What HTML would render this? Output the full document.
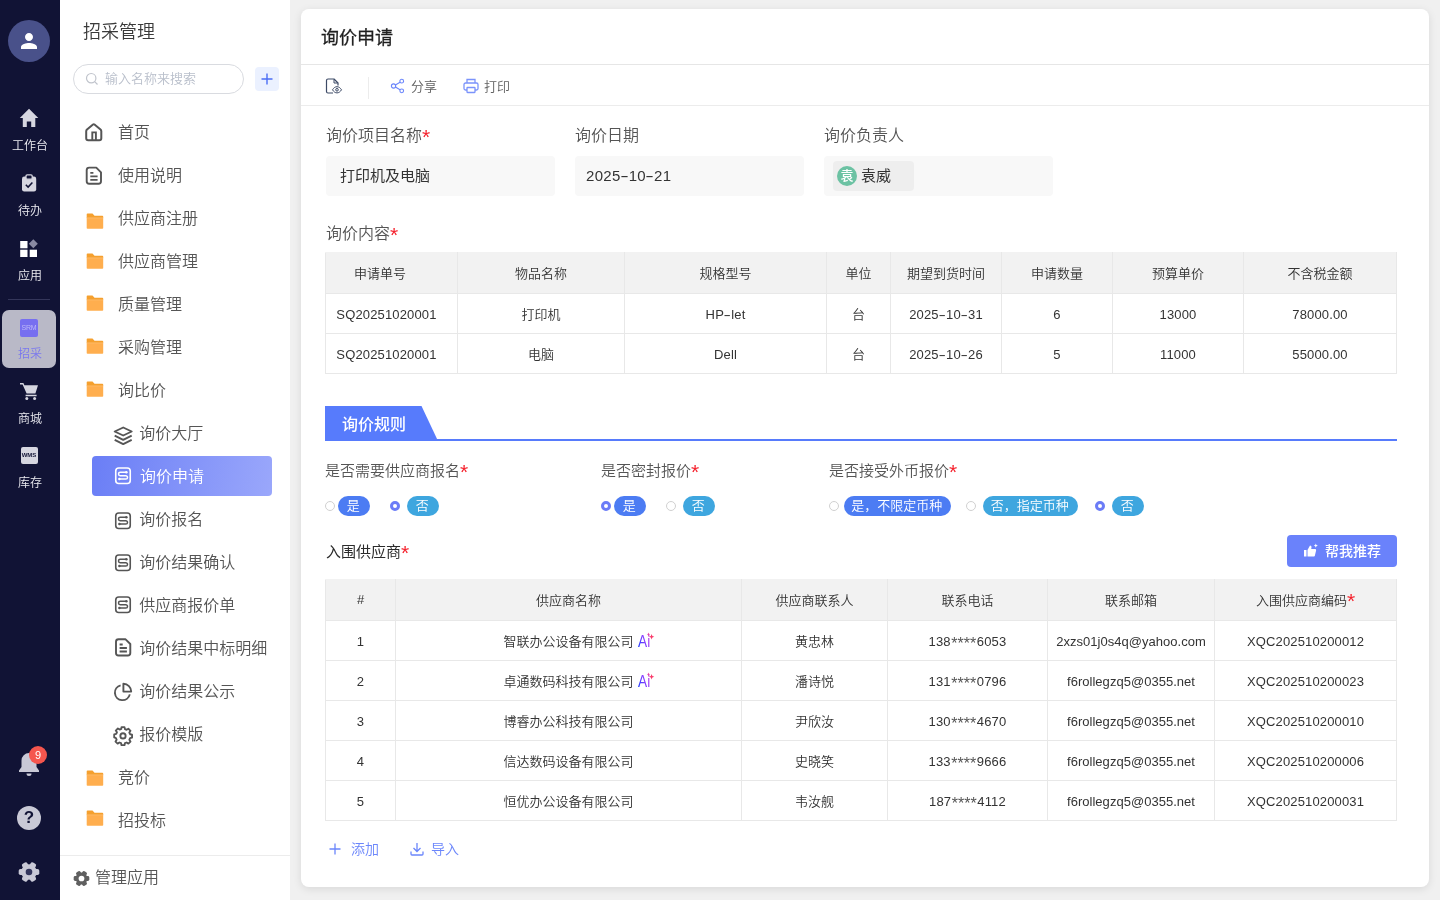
<!DOCTYPE html>
<html lang="zh-CN">
<head>
<meta charset="utf-8">
<title>询价申请</title>
<style>
*{box-sizing:border-box;margin:0;padding:0}
html,body{width:1440px;height:900px;overflow:hidden;background:#f0f0f0;
 font-family:"Liberation Sans","Noto Sans CJK SC",sans-serif;color:#333;font-weight:350}
#root{position:absolute;left:0;top:0;width:1440px;height:900px;will-change:transform}
.abs{position:absolute}
#rail{position:absolute;left:0;top:0;width:60px;height:900px;background:#111335}
.rl{position:absolute;left:0;width:60px;text-align:center;color:#ececf2;font-size:12px;line-height:14px}
#side{position:absolute;left:60px;top:0;width:230px;height:900px;background:#fff}
#side h1{position:absolute;left:23px;top:19px;font-size:18px;font-weight:350;color:#3a3a3a;line-height:26px}
.search{position:absolute;left:13px;top:64px;width:171px;height:30px;border:1px solid #d9dbe0;border-radius:15px}
.search span{position:absolute;left:31px;top:0;line-height:28px;font-size:13px;color:#b9bfcb}
.plus{position:absolute;left:195px;top:67px;width:24px;height:24px;background:#ebf1ff;border-radius:4px}
.mi{position:absolute;left:0;width:230px;height:40px;font-size:16px;line-height:40px;color:#555}
.mi .ic{position:absolute;top:8px;width:24px;height:24px}
.mi .tx{position:absolute;top:1px}
.mi.l1 .ic{left:22px}
.mi.l1 .tx{left:58px}
.mi.l2 .ic{left:50px}
.mi.l2 .tx{left:79.300px}
.mi.sel{left:32px;width:180px;border-radius:4px;background:linear-gradient(100deg,#6a7ef6,#9aa7fb);color:#fff}
.mi.sel .ic{left:18px}
.mi.sel .tx{left:48px}
#sidefoot{position:absolute;left:0;top:855px;width:230px;height:45px;border-top:1px solid #ececec;font-size:16px;color:#555;line-height:44px}
#card{position:absolute;left:301px;top:9px;width:1128px;height:878px;background:#fff;border-radius:8px;box-shadow:0 2px 8px rgba(0,0,0,.10)}
#card h2{position:absolute;left:20px;top:14.500px;font-size:18px;font-weight:400;color:#1f1f1f;line-height:28px;-webkit-text-stroke:.3px #1f1f1f}
.hl{position:absolute;left:0;width:1128px;height:1px;background:#e6e6e6}
.tb{font-size:13px;line-height:20px;color:#606060}
.lab{position:absolute;font-size:16px;line-height:22px;color:#555;white-space:nowrap}
.l15{font-size:15px}
.req{color:#f5222d;font-size:21px;line-height:0;position:relative;top:3px;font-weight:400}
.inp{position:absolute;height:40px;width:229px;background:#f8f8f8;font-weight:400;border-radius:4px;font-size:15px;line-height:40px;color:#333}
.num15{letter-spacing:.3px}
.hy{display:inline-block;transform:scaleX(1.700);margin:0 1.400px}
table{position:absolute;border-collapse:collapse;table-layout:fixed;font-size:13px;color:#333}
td,th{border:1px solid #e8e8e8;text-align:center;font-weight:350;height:40px;padding:0 0 1px;white-space:nowrap}
th{background:#f2f2f2;height:41px;border-top-color:#f2f2f2;padding-top:0;padding-bottom:2px}
td.n{letter-spacing:.15px;padding:1px 0 0}
.t1 th:first-child{padding-right:23px}
.t1 td:first-child{padding-right:10px}
.st{font-size:16px;line-height:0;position:relative;top:3.500px;letter-spacing:0;margin:0 .7px 0 .5px;color:#555}
td.e{letter-spacing:.030px}
.nm{position:relative;display:inline-block}
.ai{position:absolute;left:100%;margin-left:4.800px;top:0.500px}
.pill{position:absolute;top:487px;height:20px;border-radius:10px;color:#fff;font-size:13px;line-height:19px;text-align:center;font-weight:350;padding-right:1.500px}
.pb{background:#4c7cf3}
.pc{background:#3ea6df}
.rad{position:absolute;width:10px;height:10px;border-radius:50%;border:1px solid #d0d0d0;background:#fff}
.rad.on{border:3px solid #6b7cf7}
.lnk{position:absolute;font-size:14px;color:#6b86fb;line-height:20px}
</style>
</head>
<body>
<svg width="0" height="0" style="position:absolute"><defs><linearGradient id="ag" x1="0" y1="0.800" x2="1" y2="0.200"><stop offset="0" stop-color="#1f3cff"/><stop offset="0.550" stop-color="#8a40ff"/><stop offset="1" stop-color="#c840e0"/></linearGradient></defs></svg>
<div id="root">
<div id="rail">
<div class="abs" style="left:8px;top:20px;width:42px;height:42px;border-radius:50%;background:#49518a"></div>
<svg class="abs" style="left:17px;top:29px" width="24" height="24" viewBox="0 0 24 24"><path fill="#fff" d="M12 12c2.210 0 4-1.790 4-4s-1.790-4-4-4-4 1.790-4 4 1.790 4 4 4zm0 2c-2.670 0-8 1.340-8 4v2h16v-2c0-2.660-5.330-4-8-4z"/></svg>
<svg class="abs" style="left:0;top:100px" width="60" height="40" viewBox="0 100 60 40"><path d="M29 108.800 38.300 118h-3v9h-4.100v-5.400h-4.400v5.400h-4v-9h-3z" fill="#d6d6e0"/></svg>
<div class="rl" style="top:139px">工作台</div>
<svg class="abs" style="left:0;top:165px" width="60" height="35" viewBox="0 165 60 35"><rect x="22" y="176.600" width="14.200" height="14.800" rx="2.200" fill="#d6d6e0"/><rect x="26" y="174.800" width="6.200" height="4.400" rx="1.200" fill="#111335" stroke="#d6d6e0" stroke-width="1.300"/><path d="M25.800 184.800l2.300 2.300 4.300-4.600" stroke="#111335" stroke-width="1.500" fill="none"/></svg>
<div class="rl" style="top:204px">待办</div>
<svg class="abs" style="left:0;top:235px" width="60" height="30" viewBox="0 235 60 30"><rect x="20.200" y="241" width="7.300" height="7.300" fill="#fff"/><rect x="20.200" y="249.700" width="7.300" height="7.300" fill="#fff"/><rect x="29.700" y="249.700" width="7.300" height="7.300" fill="#fff"/><path d="M33.300 239.300l4.500 4.500-4.500 4.500-4.500-4.500z" fill="#8a8aa2"/></svg>
<div class="rl" style="top:269px">应用</div>
<div class="abs" style="left:8px;top:299px;width:42px;height:1px;background:#34365a"></div>
<div class="abs" style="left:2px;top:310px;width:54px;height:58px;border-radius:7px;background:#b9b9c7"></div>
<div class="abs" style="left:20px;top:319px;width:18px;height:18px;border-radius:2px;background:#776ff0;color:#bdb8f8;font-size:7px;line-height:18px;text-align:center;letter-spacing:-0.200px">SRM</div>
<div class="rl" style="top:347px;color:#7a78ee">招采</div>
<svg class="abs" style="left:0;top:378px" width="60" height="26" viewBox="0 378 60 26"><path d="M20 383h3.400l1 2.300H38l-2.600 8.200H26.600L22.600 384.600H20z" fill="#d6d6e0"/><path d="M25.600 394.800h11v1.500h-11z" fill="#d6d6e0"/><circle cx="26.800" cy="398.600" r="1.500" fill="#d6d6e0"/><circle cx="34.600" cy="398.600" r="1.500" fill="#d6d6e0"/></svg>
<div class="rl" style="top:412px">商城</div>
<div class="abs" style="left:20.500px;top:446.500px;width:17px;height:17px;border-radius:2px;background:#d6d6e0;color:#111335;font-size:6px;line-height:17px;text-align:center;font-weight:700">WMS</div>
<div class="rl" style="top:476px">库存</div>
<svg class="abs" style="left:16px;top:750px" width="26" height="28" viewBox="0 0 26 28"><path d="M13 3a7.500 7.500 0 0 0-7.500 7.500V17L3 20.500V22h20v-1.500L20.500 17v-6.500A7.500 7.500 0 0 0 13 3z" fill="#c9c9d6"/><path d="M10.500 23.500a2.500 2.500 0 0 0 5 0z" fill="#c9c9d6"/></svg>
<div class="abs" style="left:29px;top:746px;width:18px;height:18px;border-radius:50%;background:#f5564e;color:#fff;font-size:11px;line-height:18px;text-align:center">9</div>
<div class="abs" style="left:17px;top:806px;width:24px;height:24px;border-radius:50%;background:#c9c9d6;color:#111335;font-size:17px;line-height:24px;text-align:center;font-weight:700">?</div>
<svg class="abs" style="left:15.500px;top:858.700px" width="26" height="26" viewBox="-13 -13 26 26"><g fill="#c9c9d6"><circle r="7.800"/><rect x="-3" y="-10.300" width="6" height="6" rx="1.800" transform="rotate(30)"/><rect x="-3" y="-10.300" width="6" height="6" rx="1.800" transform="rotate(90)"/><rect x="-3" y="-10.300" width="6" height="6" rx="1.800" transform="rotate(150)"/><rect x="-3" y="-10.300" width="6" height="6" rx="1.800" transform="rotate(210)"/><rect x="-3" y="-10.300" width="6" height="6" rx="1.800" transform="rotate(270)"/><rect x="-3" y="-10.300" width="6" height="6" rx="1.800" transform="rotate(330)"/></g><circle r="3.300" fill="#33355c"/></svg>
</div>
<div id="side">
<h1>招采管理</h1>
<div class="search"><svg class="abs" style="left:11px;top:7px" width="14" height="14" viewBox="0 0 14 14"><circle cx="6.200" cy="6.200" r="4.700" fill="none" stroke="#c0c4cc" stroke-width="1.200"/><path d="M9.700 9.700l2.800 2.800" stroke="#c0c4cc" stroke-width="1.200"/></svg><span>输入名称来搜索</span></div>
<div class="plus"><svg width="24" height="24" viewBox="0 0 24 24"><path d="M12 6.500v11M6.500 12h11" stroke="#4c6ef5" stroke-width="1.400"/></svg></div>
<div class="mi l1" style="top:112px"><svg class="ic" viewBox="0 0 24 24" ><path d="M4.200 11.200Q4.200 10.200 5 9.500L11 4.500Q11.750 3.900 12.500 4.500L18.500 9.500Q19.300 10.200 19.300 11.200V18.200Q19.300 20.200 17.300 20.200H6.200Q4.200 20.200 4.200 18.200Z" fill="none" stroke="#555" stroke-width="2" stroke-linejoin="round"/><path d="M10.300 20V12.400H13.900V20" fill="none" stroke="#555" stroke-width="1.900"/></svg><span class="tx">首页</span></div>
<div class="mi l1" style="top:155px"><svg class="ic" viewBox="0 0 24 24" ><path d="M7.200 4.600H14.300L19 9.300V18.300Q19 20.800 16.500 20.800H7.200Q4.700 20.800 4.700 18.300V7.100Q4.700 4.600 7.200 4.600Z" fill="none" stroke="#555" stroke-width="1.900" stroke-linejoin="round"/><path d="M8.300 9.800H11.400M8.300 13.300H15.600M8.300 16.800H15.600" fill="none" stroke="#555" stroke-width="1.800"/></svg><span class="tx">使用说明</span></div>
<div class="mi l1" style="top:198px"><svg class="ic" viewBox="0 0 24 24" ><path d="M4.700 8.300Q4.700 7.500 5.500 7.500H10.500L12.500 9.700H20.400Q21.200 9.700 21.200 10.500V12H4.700Z" fill="#f5a02e"/><path d="M4.700 11.700H21.200V22Q21.200 22.800 20.400 22.800H5.500Q4.700 22.800 4.700 22Z" fill="#ffae4e"/><path d="M4.700 11.900H21.200" stroke="#ffc888" stroke-width="0.500"/></svg><span class="tx">供应商注册</span></div>
<div class="mi l1" style="top:241px"><svg class="ic" style="top:5px" viewBox="0 0 24 24" ><path d="M4.700 8.300Q4.700 7.500 5.500 7.500H10.500L12.500 9.700H20.400Q21.200 9.700 21.200 10.500V12H4.700Z" fill="#f5a02e"/><path d="M4.700 11.700H21.200V22Q21.200 22.800 20.400 22.800H5.500Q4.700 22.800 4.700 22Z" fill="#ffae4e"/><path d="M4.700 11.900H21.200" stroke="#ffc888" stroke-width="0.500"/></svg><span class="tx">供应商管理</span></div>
<div class="mi l1" style="top:284px"><svg class="ic" style="top:4.2px" viewBox="0 0 24 24" ><path d="M4.700 8.300Q4.700 7.500 5.500 7.500H10.500L12.500 9.700H20.400Q21.200 9.700 21.200 10.500V12H4.700Z" fill="#f5a02e"/><path d="M4.700 11.700H21.200V22Q21.200 22.800 20.400 22.800H5.500Q4.700 22.800 4.700 22Z" fill="#ffae4e"/><path d="M4.700 11.900H21.200" stroke="#ffc888" stroke-width="0.500"/></svg><span class="tx">质量管理</span></div>
<div class="mi l1" style="top:327px"><svg class="ic" style="top:4px" viewBox="0 0 24 24" ><path d="M4.700 8.300Q4.700 7.500 5.500 7.500H10.500L12.500 9.700H20.400Q21.200 9.700 21.200 10.500V12H4.700Z" fill="#f5a02e"/><path d="M4.700 11.700H21.200V22Q21.200 22.800 20.400 22.800H5.500Q4.700 22.800 4.700 22Z" fill="#ffae4e"/><path d="M4.700 11.900H21.200" stroke="#ffc888" stroke-width="0.500"/></svg><span class="tx">采购管理</span></div>
<div class="mi l1" style="top:370px"><svg class="ic" style="top:4px" viewBox="0 0 24 24" ><path d="M4.700 8.300Q4.700 7.500 5.500 7.500H10.500L12.500 9.700H20.400Q21.200 9.700 21.200 10.500V12H4.700Z" fill="#f5a02e"/><path d="M4.700 11.700H21.200V22Q21.200 22.800 20.400 22.800H5.500Q4.700 22.800 4.700 22Z" fill="#ffae4e"/><path d="M4.700 11.900H21.200" stroke="#ffc888" stroke-width="0.500"/></svg><span class="tx">询比价</span></div>
<div class="mi l2" style="top:413px"><svg class="ic" viewBox="0 0 24 24" style="overflow:visible"><path d="M13.200 6.500 4.700 10.500 13.200 14.500 21.700 10.500Z" fill="none" stroke="#555" stroke-width="1.900" stroke-linejoin="round"/><path d="M4.700 14.700 13.200 18.900 21.700 14.700M4.700 18.900 13.200 23.100 21.700 18.900" fill="none" stroke="#555" stroke-width="1.900" stroke-linejoin="round"/></svg><span class="tx">询价大厅</span></div>
<div class="mi l2 sel" style="top:456px"><svg class="ic" viewBox="0 0 24 24" ><rect x="5.750" y="3.950" width="14.500" height="15.600" rx="3" fill="none" stroke="#fff" stroke-width="1.600"/><path d="M16.300 8.300H10.200a1.700 1.700 0 0 0 0 3.400H15.800a1.700 1.700 0 0 1 0 3.400H9.500" fill="none" stroke="#fff" stroke-width="1.500"/><circle cx="16.400" cy="8.300" r="1.250" fill="#fff"/><circle cx="9.400" cy="15.100" r="1.250" fill="#fff"/></svg><span class="tx">询价申请</span></div>
<div class="mi l2" style="top:499px"><svg class="ic" style="top:9.9px" viewBox="0 0 24 24" ><rect x="5.750" y="3.950" width="14.500" height="15.600" rx="3" fill="none" stroke="#555" stroke-width="1.600"/><path d="M16.300 8.300H10.200a1.700 1.700 0 0 0 0 3.400H15.800a1.700 1.700 0 0 1 0 3.400H9.500" fill="none" stroke="#555" stroke-width="1.500"/><circle cx="16.400" cy="8.300" r="1.250" fill="#555"/><circle cx="9.400" cy="15.100" r="1.250" fill="#555"/></svg><span class="tx">询价报名</span></div>
<div class="mi l2" style="top:542px"><svg class="ic" style="top:8.8px" viewBox="0 0 24 24" ><rect x="5.750" y="3.950" width="14.500" height="15.600" rx="3" fill="none" stroke="#555" stroke-width="1.600"/><path d="M16.300 8.300H10.200a1.700 1.700 0 0 0 0 3.400H15.800a1.700 1.700 0 0 1 0 3.400H9.500" fill="none" stroke="#555" stroke-width="1.500"/><circle cx="16.400" cy="8.300" r="1.250" fill="#555"/><circle cx="9.400" cy="15.100" r="1.250" fill="#555"/></svg><span class="tx">询价结果确认</span></div>
<div class="mi l2" style="top:585px"><svg class="ic" viewBox="0 0 24 24" ><rect x="5.750" y="3.950" width="14.500" height="15.600" rx="3" fill="none" stroke="#555" stroke-width="1.600"/><path d="M16.300 8.300H10.200a1.700 1.700 0 0 0 0 3.400H15.800a1.700 1.700 0 0 1 0 3.400H9.500" fill="none" stroke="#555" stroke-width="1.500"/><circle cx="16.400" cy="8.300" r="1.250" fill="#555"/><circle cx="9.400" cy="15.100" r="1.250" fill="#555"/></svg><span class="tx">供应商报价单</span></div>
<div class="mi l2" style="top:628px"><svg class="ic" viewBox="0 0 24 24" ><g transform="translate(1.300,-1.300)"><path d="M7.200 4.600H14.300L19 9.300V18.300Q19 20.800 16.500 20.800H7.200Q4.700 20.800 4.700 18.300V7.100Q4.700 4.600 7.200 4.600Z" fill="none" stroke="#555" stroke-width="1.900" stroke-linejoin="round"/><path d="M8.300 9.800H11.400M8.300 13.300H15.600M8.300 16.800H15.600" fill="none" stroke="#555" stroke-width="1.800"/></g></svg><span class="tx">询价结果中标明细</span></div>
<div class="mi l2" style="top:671px"><svg class="ic" viewBox="0 0 24 24" ><path d="M10.600 6.300A7.550 7.550 0 1 0 19.800 15.400" fill="none" stroke="#555" stroke-width="1.900"/><path d="M13.400 4.800V12.600H21.200A7.800 7.800 0 0 0 13.400 4.800Z" fill="none" stroke="#555" stroke-width="1.900" stroke-linejoin="round"/></svg><span class="tx">询价结果公示</span></div>
<div class="mi l2" style="top:714px"><svg class="ic" viewBox="0 0 24 24" ><g transform="translate(13,13.900) scale(0.880) translate(-12,-13)"><path fill="none" stroke="#555" stroke-width="2.100" stroke-linejoin="round" d="M10.300 3h3.400l.5 2.300 1.900.8 2-1.300 2.400 2.400-1.300 2 .8 1.900 2.300.5v3.400l-2.300.5-.8 1.900 1.300 2-2.400 2.400-2-1.300-1.900.8-.5 2.300h-3.400l-.5-2.300-1.900-.8-2 1.300-2.400-2.400 1.300-2-.8-1.900L2 14.700v-3.400l2.300-.5.800-1.900-1.300-2 2.400-2.400 2 1.300 1.900-.8z"/><circle cx="12" cy="13" r="3" fill="none" stroke="#555" stroke-width="2.100"/></g></svg><span class="tx">报价模版</span></div>
<div class="mi l1" style="top:757px"><svg class="ic" style="top:6.3px" viewBox="0 0 24 24" ><path d="M4.700 8.300Q4.700 7.500 5.500 7.500H10.500L12.500 9.700H20.400Q21.200 9.700 21.200 10.500V12H4.700Z" fill="#f5a02e"/><path d="M4.700 11.700H21.200V22Q21.200 22.800 20.400 22.800H5.500Q4.700 22.800 4.700 22Z" fill="#ffae4e"/><path d="M4.700 11.900H21.200" stroke="#ffc888" stroke-width="0.500"/></svg><span class="tx">竞价</span></div>
<div class="mi l1" style="top:800px"><svg class="ic" style="top:3.3px" viewBox="0 0 24 24" ><path d="M4.700 8.300Q4.700 7.500 5.500 7.500H10.500L12.500 9.700H20.400Q21.200 9.700 21.200 10.500V12H4.700Z" fill="#f5a02e"/><path d="M4.700 11.700H21.200V22Q21.200 22.800 20.400 22.800H5.500Q4.700 22.800 4.700 22Z" fill="#ffae4e"/><path d="M4.700 11.900H21.200" stroke="#ffc888" stroke-width="0.500"/></svg><span class="tx">招投标</span></div>
<div id="sidefoot"><svg class="abs" style="left:12.200px;top:13px" width="19" height="19" viewBox="-9 -9 18 18"><g fill="#606060" transform="rotate(30)"><circle r="5.600"/><rect x="-2.300" y="-7.400" width="4.600" height="4.500" rx="1.400" transform="rotate(0)"/><rect x="-2.300" y="-7.400" width="4.600" height="4.500" rx="1.400" transform="rotate(60)"/><rect x="-2.300" y="-7.400" width="4.600" height="4.500" rx="1.400" transform="rotate(120)"/><rect x="-2.300" y="-7.400" width="4.600" height="4.500" rx="1.400" transform="rotate(180)"/><rect x="-2.300" y="-7.400" width="4.600" height="4.500" rx="1.400" transform="rotate(240)"/><rect x="-2.300" y="-7.400" width="4.600" height="4.500" rx="1.400" transform="rotate(300)"/></g><circle r="2.700" fill="#fff"/></svg><span class="abs" style="left:35px;top:0">管理应用</span></div>
</div>
<div id="card">
<h2>询价申请</h2>
<div class="hl" style="top:55px"></div>
<div class="hl" style="top:96px;background:#ececec"></div>
<svg class="abs" style="left:22.8px;top:67px" width="20" height="20" viewBox="0 0 20 20"><path d="M9 17H4a1.500 1.500 0 0 1-1.500-1.500v-11A1.500 1.500 0 0 1 4 3h6l4 4v2.500" fill="none" stroke="#3d4a66" stroke-width="1.200" stroke-linejoin="round"/><path d="M10 3.300V7h3.700" fill="none" stroke="#3d4a66" stroke-width="1"/><path d="M8.500 13.800c1.300-2.100 2.800-3.100 4.500-3.100s3.200 1 4.500 3.100c-1.300 2.100-2.800 3.100-4.500 3.100s-3.200-1-4.500-3.100z" fill="#fff" stroke="#3d4a66" stroke-width="1"/><circle cx="13" cy="13.800" r="1.300" fill="none" stroke="#3d4a66" stroke-width="1"/></svg>
<div class="abs" style="left:67px;top:68px;width:1px;height:22px;background:#ececec"></div>
<svg class="abs" style="left:88px;top:68px" width="18" height="18" viewBox="0 0 18 18"><g transform="translate(9,9) scale(0.930) translate(-9,-9)"><circle cx="4.200" cy="9" r="2.300" fill="none" stroke="#6b86fb" stroke-width="1.200"/><circle cx="13" cy="3.800" r="2" fill="none" stroke="#6b86fb" stroke-width="1.200"/><circle cx="13" cy="14.200" r="2" fill="none" stroke="#6b86fb" stroke-width="1.200"/><path d="M6.200 7.900l5-3M6.200 10.100l5 3" stroke="#6b86fb" stroke-width="1.200"/></g></svg>
<span class="abs tb" style="left:110px;top:68px">分享</span>
<svg class="abs" style="left:161px;top:68px" width="18" height="18" viewBox="0 0 18 18"><path d="M5 6V2.500h8V6" fill="none" stroke="#7b93fb" stroke-width="1.300"/><rect x="2" y="6" width="14" height="7" rx="1.500" fill="none" stroke="#7b93fb" stroke-width="1.300"/><rect x="5" y="10.500" width="8" height="5" rx="0.500" fill="#fff" stroke="#7b93fb" stroke-width="1.300"/></svg>
<span class="abs tb" style="left:183px;top:68px">打印</span>
<div class="lab" style="left:25px;top:116px">询价项目名称<span class="req">*</span></div>
<div class="lab" style="left:274px;top:116px">询价日期</div>
<div class="lab" style="left:523px;top:116px">询价负责人</div>
<div class="inp" style="left:25px;top:147px;padding-left:14px">打印机及电脑</div>
<div class="inp num15" style="left:274px;top:147px;padding-left:11px">2025<span class="hy">-</span>10<span class="hy">-</span>21</div>
<div class="inp" style="left:523px;top:147px"><div class="abs" style="left:9px;top:5px;width:81px;height:30px;background:#eeeeee;border-radius:4px"></div><div class="abs" style="left:13px;top:10px;width:20px;height:20px;border-radius:50%;background:#6cc2a3;color:#fff;font-size:13px;line-height:20px;text-align:center;font-weight:500">袁</div><span class="abs" style="left:37px;top:0">袁威</span></div>
<div class="lab" style="left:25px;top:214px">询价内容<span class="req">*</span></div>
<table class="t1" style="left:24px;top:243px;width:1071px"><colgroup><col style="width:132px"><col style="width:167px"><col style="width:202px"><col style="width:64px"><col style="width:111px"><col style="width:111px"><col style="width:131px"><col style="width:153px"></colgroup>
<tr><th>申请单号</th><th>物品名称</th><th>规格型号</th><th>单位</th><th>期望到货时间</th><th>申请数量</th><th>预算单价</th><th>不含税金额</th></tr>
<tr><td class=n>SQ20251020001</td><td>打印机</td><td class=n>HP<span class="hy">-</span>let</td><td>台</td><td class=n>2025<span class="hy">-</span>10<span class="hy">-</span>31</td><td class=n>6</td><td class=n>13000</td><td class=n>78000.00</td></tr>
<tr><td class=n>SQ20251020001</td><td>电脑</td><td class=n>Dell</td><td>台</td><td class=n>2025<span class="hy">-</span>10<span class="hy">-</span>26</td><td class=n>5</td><td class=n>11000</td><td class=n>55000.00</td></tr>
</table>
<div class="abs" style="left:24px;top:430px;width:1072px;height:2px;background:#577bfc"></div>
<svg class="abs" style="left:24px;top:397px" width="114" height="35" viewBox="0 0 114 35"><path d="M0 0h96.500l16.500 35H0z" fill="#577bfc"/></svg>
<div class="abs" style="left:41px;top:404px;font-size:16px;line-height:24px;color:#fff;font-weight:500">询价规则</div>
<div class="lab l15" style="left:24px;top:451px">是否需要供应商报名<span class="req">*</span></div>
<div class="lab l15" style="left:300px;top:451px">是否密封报价<span class="req">*</span></div>
<div class="lab l15" style="left:528px;top:451px">是否接受外币报价<span class="req">*</span></div>
<div class="rad" style="left:24px;top:492px"></div>
<div class="pill pb" style="left:37px;width:32px">是</div>
<div class="rad on" style="left:89px;top:491.5px"></div>
<div class="pill pc" style="left:106px;width:32px">否</div>
<div class="rad on" style="left:300px;top:491.5px"></div>
<div class="pill pb" style="left:313px;width:32px">是</div>
<div class="rad" style="left:365px;top:492px"></div>
<div class="pill pc" style="left:382px;width:32px">否</div>
<div class="rad" style="left:528px;top:492px"></div>
<div class="pill pb" style="left:543px;width:107px">是，不限定币种</div>
<div class="rad" style="left:665px;top:492px"></div>
<div class="pill pc" style="left:682px;width:95px">否，指定币种</div>
<div class="rad on" style="left:794px;top:491.5px"></div>
<div class="pill pc" style="left:811px;width:32px">否</div>
<div class="abs" style="left:25px;top:532px;font-size:15px;line-height:22px;color:#2b2b2b;font-weight:400">入围供应商<span class="req">*</span></div>
<div class="abs" style="left:986px;top:526px;width:110px;height:32px;background:#6a82fb;border-radius:4px;color:#fff;font-size:14px;line-height:33px;font-weight:500"><svg class="abs" style="left:15px;top:7px" width="18" height="18" viewBox="0 0 18 18"><path d="M2 8h2.500v6.500H2zM5.500 8l2.500-4.500c1 0 1.700.8 1.500 2L9.200 7H13c.8 0 1.300.7 1.100 1.500l-1.200 5c-.1.600-.6 1-1.200 1H5.500z" fill="#fff"/><path d="M13.800 1.500l.6 1.500 1.500.6-1.500.6-.6 1.500-.6-1.500-1.500-.6 1.500-.6z" fill="#fff"/></svg><span class="abs" style="left:38px;top:0">帮我推荐</span></div>
<table class="t2" style="left:24px;top:570px;width:1071px"><colgroup><col style="width:70px"><col style="width:346px"><col style="width:146px"><col style="width:160px"><col style="width:167px"><col style="width:182px"></colgroup>
<tr><th>#</th><th>供应商名称</th><th>供应商联系人</th><th>联系电话</th><th>联系邮箱</th><th>入围供应商编码<span class="req">*</span></th></tr>
<tr><td class=n>1</td><td><span class="nm">智联办公设备有限公司<svg class="ai" width="20" height="18" viewBox="0 0 20 18"><text x="0" y="15.500" font-size="16.500" fill="url(#ag)" textLength="12.200" lengthAdjust="spacingAndGlyphs">Ai</text><path d="M10.5 1.5000000000000002l0.48 1.22 1.22 0.48-1.22 0.48-0.48 1.22-0.48-1.22-1.22-0.48 1.22-0.48z" fill="#e83e9c"/><path d="M13.6 3.0l0.76 1.94 1.94 0.76-1.94 0.76-0.76 1.94-0.76-1.94-1.94-0.76 1.94-0.76z" fill="#fa3a6a"/></svg></span></td><td>黄忠林</td><td class=n>138<span class="st">****</span>6053</td><td class="n e">2xzs01j0s4q@yahoo.com</td><td class=n>XQC202510200012</td></tr>
<tr><td class=n>2</td><td><span class="nm">卓通数码科技有限公司<svg class="ai" width="20" height="18" viewBox="0 0 20 18"><text x="0" y="15.500" font-size="16.500" fill="url(#ag)" textLength="12.200" lengthAdjust="spacingAndGlyphs">Ai</text><path d="M10.5 1.5000000000000002l0.48 1.22 1.22 0.48-1.22 0.48-0.48 1.22-0.48-1.22-1.22-0.48 1.22-0.48z" fill="#e83e9c"/><path d="M13.6 3.0l0.76 1.94 1.94 0.76-1.94 0.76-0.76 1.94-0.76-1.94-1.94-0.76 1.94-0.76z" fill="#fa3a6a"/></svg></span></td><td>潘诗悦</td><td class=n>131<span class="st">****</span>0796</td><td class="n e">f6rollegzq5@0355.net</td><td class=n>XQC202510200023</td></tr>
<tr><td class=n>3</td><td><span class="nm">博睿办公科技有限公司</span></td><td>尹欣汝</td><td class=n>130<span class="st">****</span>4670</td><td class="n e">f6rollegzq5@0355.net</td><td class=n>XQC202510200010</td></tr>
<tr><td class=n>4</td><td><span class="nm">信达数码设备有限公司</span></td><td>史晓笑</td><td class=n>133<span class="st">****</span>9666</td><td class="n e">f6rollegzq5@0355.net</td><td class=n>XQC202510200006</td></tr>
<tr><td class=n>5</td><td><span class="nm">恒优办公设备有限公司</span></td><td>韦汝舰</td><td class=n>187<span class="st">****</span>4112</td><td class="n e">f6rollegzq5@0355.net</td><td class=n>XQC202510200031</td></tr>
</table>
<svg class="abs" style="left:27px;top:833px" width="14" height="14" viewBox="0 0 14 14"><path d="M7 1.500v11M1.500 7h11" stroke="#6b86fb" stroke-width="1.300"/></svg><span class="lnk" style="left:50px;top:830px">添加</span>
<svg class="abs" style="left:108px;top:832px" width="16" height="16" viewBox="0 0 16 16"><path d="M8 2v8M4.500 7 8 10.500 11.500 7M2 10.500V13q0 1 1 1h10q1 0 1-1v-2.500" fill="none" stroke="#6b86fb" stroke-width="1.300"/></svg><span class="lnk" style="left:130px;top:830px">导入</span>
</div>
</div>
</body>
</html>
